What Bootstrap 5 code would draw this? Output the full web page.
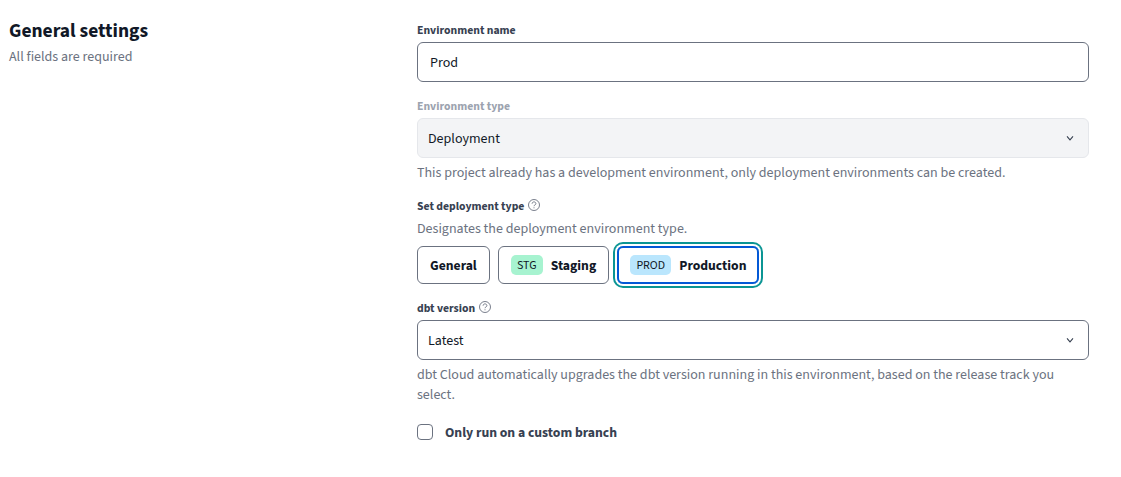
<!DOCTYPE html>
<html lang="en">
<head>
<meta charset="utf-8">
<meta name="viewport" content="width=device-width, initial-scale=1">
<title>General settings</title>
<link href="https://cdn.jsdelivr.net/npm/bootstrap@5.3.0/dist/css/bootstrap.min.css" rel="stylesheet">
<style>
body{font-family:"Source Sans 3","Source Sans Pro","Noto Sans CJK SC",sans-serif;font-size:14px;line-height:20px;color:#111827;overflow:hidden}
.settings{padding:20px 32px 0 9px}
.settings-intro{width:408px}
.settings-form{width:672px}
.settings h1{font-size:19.45px;line-height:22px;font-weight:700;margin:0 0 5px}
.hint{color:#6b7280}
.help-line{margin-top:5px}
.hint-lead{padding-top:1px}
.field-gap{margin-top:13px}
.field-gap-lg{margin-top:14px}
.type-row{margin-top:7px}
.settings .form-label{display:flex;align-items:center;font-size:11.7px;line-height:18px;height:20px;padding-top:2px;font-weight:700;color:#374151;margin:0 0 2px}
.settings .form-label.label-muted{color:#9ca3af}
.settings .form-control,.settings .form-select{height:40px;border:1px solid #6b7280;border-radius:6px;font-size:14px;line-height:20px;color:#111827;padding:10px 12px 8px}
.settings .form-select{padding-left:10px;background-image:url("data:image/svg+xml,%3csvg xmlns='http://www.w3.org/2000/svg' viewBox='0 0 8 8'%3e%3cpath fill='none' stroke='%23374151' stroke-width='1.1' d='M1 2.4L4 5.9l3-3.5'/%3e%3c/svg%3e");background-size:8px 8px;background-position:right 14px center}
.settings .form-select:disabled{background-color:#f3f4f6;border-color:#e5e7eb;opacity:1}
.help-icon{width:12px;height:12px;margin:-4px 0 0 4px;color:#6b7280}
.btn-type{--bs-btn-border-color:#6b7280;--bs-btn-color:#111827;--bs-btn-border-radius:6px;--bs-btn-active-color:#111827;height:38px;padding:2px 12px 0;font-size:13.65px;line-height:20px;font-weight:700;display:flex;align-items:center;gap:8px}
.btn.btn-type.active{border:2px solid #0459d6;padding:2px 11px 0;box-shadow:0 0 0 2px #fff,0 0 0 4px #0b9594}
.tag{border-radius:5px;height:20px;line-height:22px;margin-top:-2px;padding:0 6.2px;font-size:11.9px;font-weight:400}
.tag-stg{background:#a7f3d0}
.tag-prod{background:#bae6fd}
.settings .form-check-input{width:16px;height:16px;margin:0;border:1px solid #6b7280;border-radius:4px}
.form-check-label{font-size:13.7px;font-weight:700;color:#374151;padding-top:2px;margin:0 0 0 12px}
</style>
</head>
<body class="bg-white">
<main class="settings d-flex">
  <section class="settings-intro flex-shrink-0">
    <h1>General settings</h1>
    <p class="hint m-0">All fields are required</p>
  </section>
  <form class="settings-form flex-shrink-0">
    <div>
      <label class="form-label" for="name">Environment name</label>
      <input class="form-control" id="name" value="Prod">
    </div>
    <div class="field-gap-lg">
      <label class="form-label label-muted" for="kind">Environment type</label>
      <select class="form-select" id="kind" disabled><option>Deployment</option></select>
      <div class="hint help-line">This project already has a development environment, only deployment environments can be created.</div>
    </div>
    <div class="field-gap">
      <div class="form-label"><span>Set deployment type</span>
        <svg class="help-icon" viewBox="0 0 12 12" fill="none" stroke="currentColor"><circle cx="6" cy="6" r="5.5" stroke-width=".9"/><path d="M4.1 4.7c0-2.4 3.8-2.4 3.8 0 0 1.2-1.9 1.2-1.9 2.5M6 8.3v1" stroke-width=".9"/></svg>
      </div>
      <div class="hint hint-lead">Designates the deployment environment type.</div>
      <div class="type-row d-flex gap-2">
        <button type="button" class="btn btn-type">General</button>
        <button type="button" class="btn btn-type"><span class="tag tag-stg">STG</span>Staging</button>
        <button type="button" class="btn btn-type active"><span class="tag tag-prod">PROD</span>Production</button>
      </div>
    </div>
    <div class="field-gap-lg">
      <div class="form-label"><span>dbt version</span>
        <svg class="help-icon" viewBox="0 0 12 12" fill="none" stroke="currentColor"><circle cx="6" cy="6" r="5.5" stroke-width=".9"/><path d="M4.1 4.7c0-2.4 3.8-2.4 3.8 0 0 1.2-1.9 1.2-1.9 2.5M6 8.3v1" stroke-width=".9"/></svg>
      </div>
      <select class="form-select" aria-label="dbt version"><option>Latest</option></select>
      <div class="hint help-line">dbt Cloud automatically upgrades the dbt version running in this environment, based on the release track you select.</div>
    </div>
    <div class="d-flex align-items-center mt-3">
      <input class="form-check-input" type="checkbox" id="branch">
      <label class="form-check-label" for="branch">Only run on a custom branch</label>
    </div>
  </form>
</main>
<script src="https://cdn.jsdelivr.net/npm/bootstrap@5.3.0/dist/js/bootstrap.bundle.min.js"></script>
</body>
</html>
